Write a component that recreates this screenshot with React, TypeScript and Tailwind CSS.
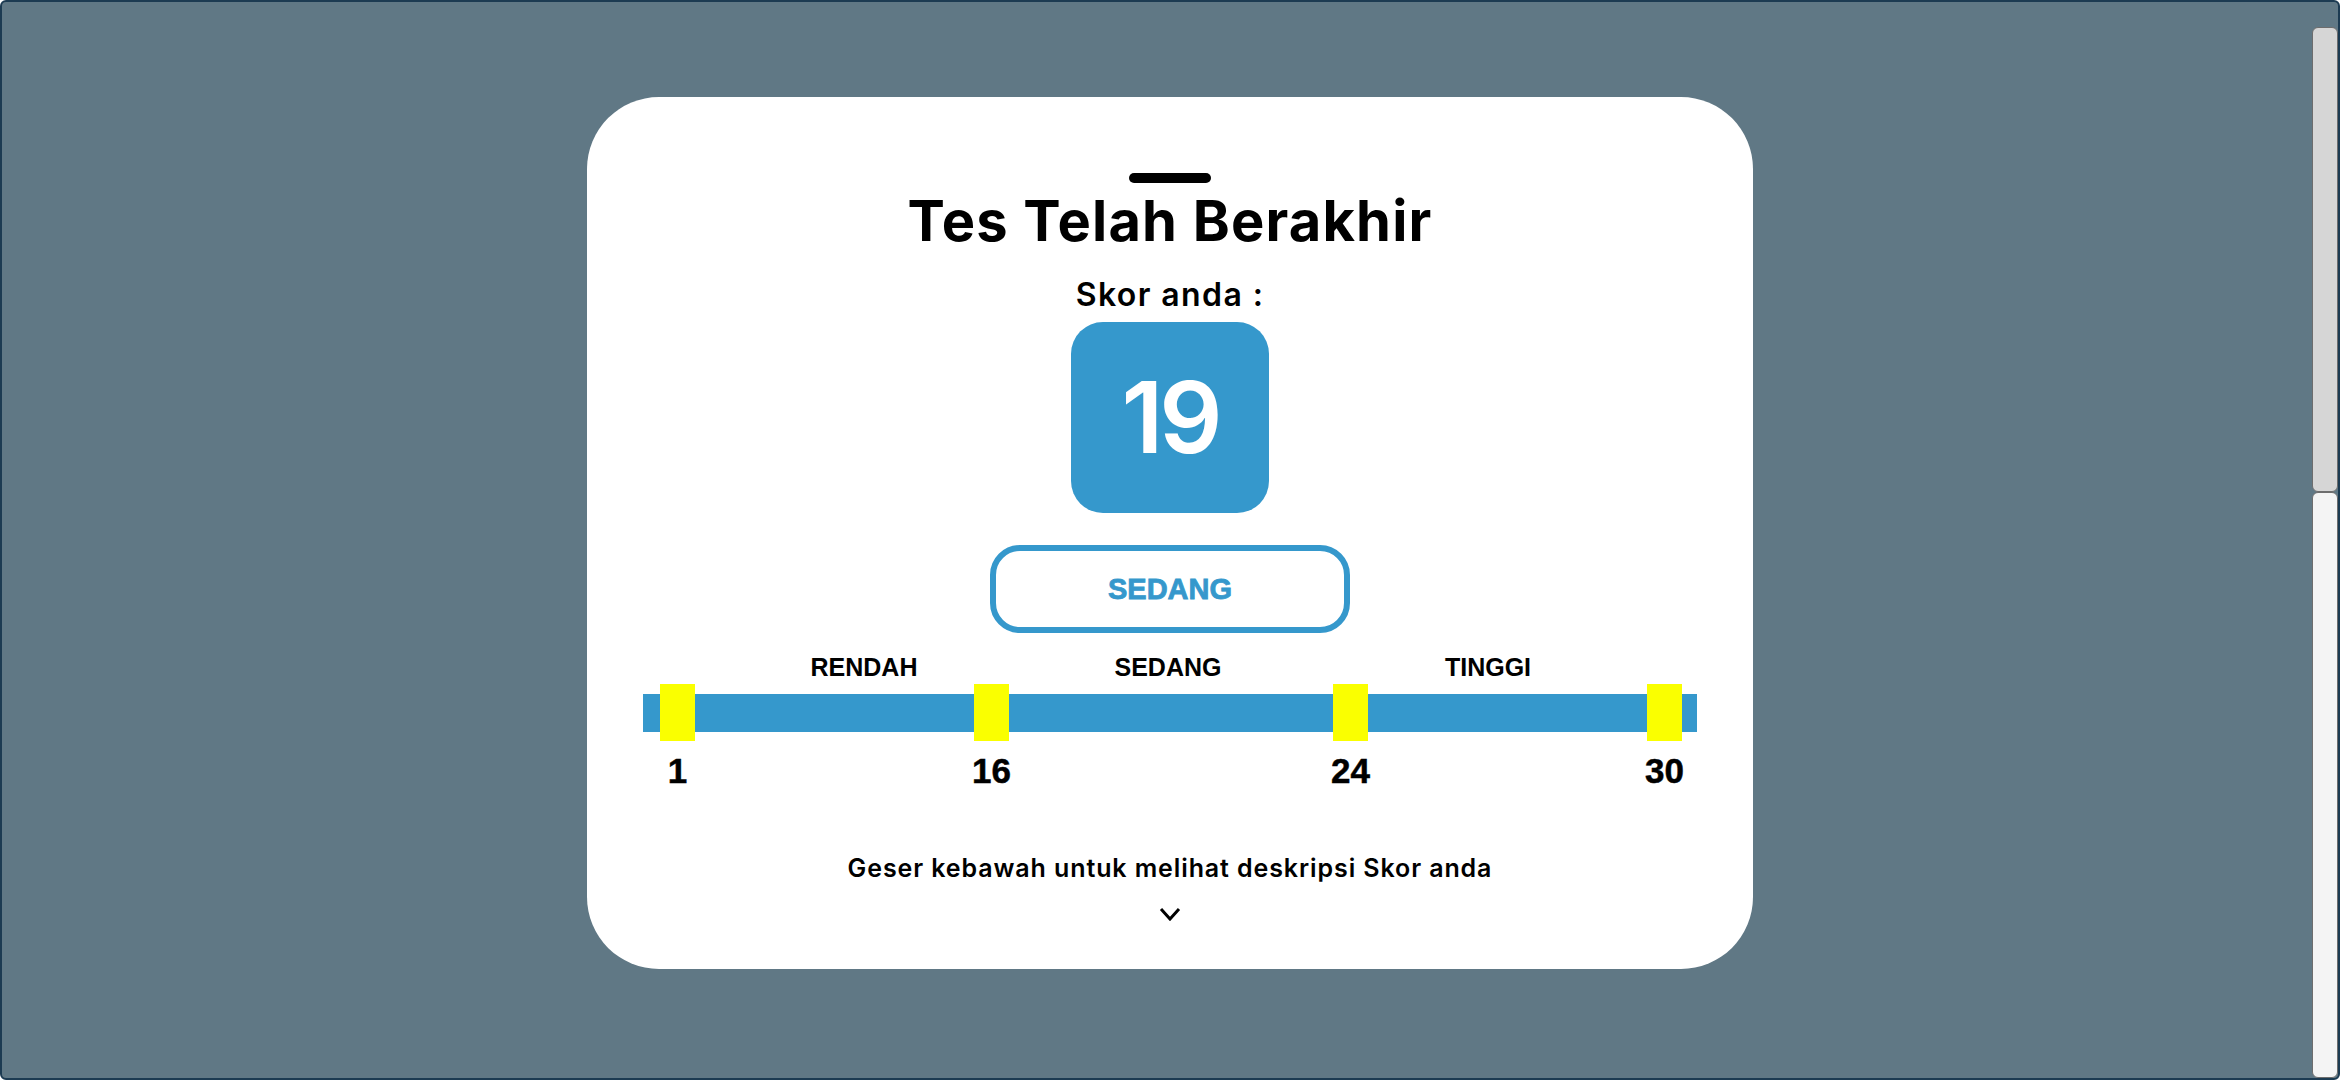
import React from 'react';

const MARKERS = [
  { nilai: '1', gap: 'ml-[17px]' },
  { nilai: '16', gap: 'ml-[279px]' },
  { nilai: '24', gap: 'ml-[324px]' },
  { nilai: '30', gap: 'ml-[279px]' },
];

export default function App() {
  return (
    <div className="relative h-[1080px] w-full overflow-hidden rounded-[6px] border-2 border-[#1c3b52] bg-[#607885] pt-[95px] font-['Inter',sans-serif]">
      {/* Kartu hasil tes */}
      <div className="mx-auto flex h-[872px] w-[1166px] flex-col items-center rounded-[72px] bg-white pt-[76px]">
        <div className="h-[10px] w-[82px] rounded-full bg-black" />
        <h1 className="mt-[10px] text-[56px] font-bold leading-none tracking-[1.2px] text-black">Tes Telah Berakhir</h1>
        <p className="mt-[30px] text-[32px] font-semibold leading-none tracking-[1.4px] text-black">Skor anda :</p>

        <div className="mt-[11px] flex h-[191px] w-[198px] items-center justify-center rounded-[32px] bg-[#3598cc]">
          <span className="text-[99px] font-semibold leading-none tracking-[-4px] text-white">19</span>
        </div>

        <div className="mt-[32px] flex h-[88px] w-[360px] items-center justify-center rounded-[30px] border-[6px] border-[#3598cc]">
          <span className="font-['Liberation_Sans',Arial,sans-serif] text-[29px] font-bold leading-none text-[#3598cc] [-webkit-text-stroke:0.8px_#3598cc]">SEDANG</span>
        </div>

        {/* Skala skor */}
        <div className="mt-[22px] w-[1054px]">
          <div className="flex pl-[121px] font-['Liberation_Sans',Arial,sans-serif] text-[25px] font-bold leading-none text-black">
            <div className="w-[200px] text-center">RENDAH</div>
            <div className="ml-[104px] w-[200px] text-center">SEDANG</div>
            <div className="ml-[120px] w-[200px] text-center">TINGGI</div>
          </div>
          <div className="mt-[4px] flex bg-[linear-gradient(to_bottom,transparent_10px,#3598cc_10px,#3598cc_48px,transparent_48px)]">
            {MARKERS.map(m => (
              <div key={m.nilai} className={`${m.gap} flex w-[35px] flex-col items-center`}>
                <div className="h-[57px] w-[35px] bg-[#faff00]" />
                <span className="mt-[12px] whitespace-nowrap font-['Liberation_Sans',Arial,sans-serif] text-[35px] font-bold leading-none text-black [-webkit-text-stroke:0.5px_#000]">{m.nilai}</span>
              </div>
            ))}
          </div>
        </div>

        <p className="mt-[68px] text-[25px] font-semibold leading-none tracking-[0.9px] text-black">Geser kebawah untuk melihat deskripsi Skor anda</p>
        <svg className="mt-[26px]" width="22" height="14" viewBox="0 0 22 14" fill="none">
          <polyline points="2,2 11,12 20,2" stroke="#000" strokeWidth="3" strokeLinecap="butt" strokeLinejoin="miter" />
        </svg>
      </div>

      {/* Scrollbar */}
      <div className="absolute right-0 top-[25px] flex h-[1051px] w-[26px] flex-col">
        <div className="h-[465px] rounded-[6px] border border-[#6d6d6d] bg-[#d6d6d6]" />
        <div className="flex-1 rounded-[6px] border border-[#6d6d6d] bg-[#f4f4f4]" />
      </div>
    </div>
  );
}
